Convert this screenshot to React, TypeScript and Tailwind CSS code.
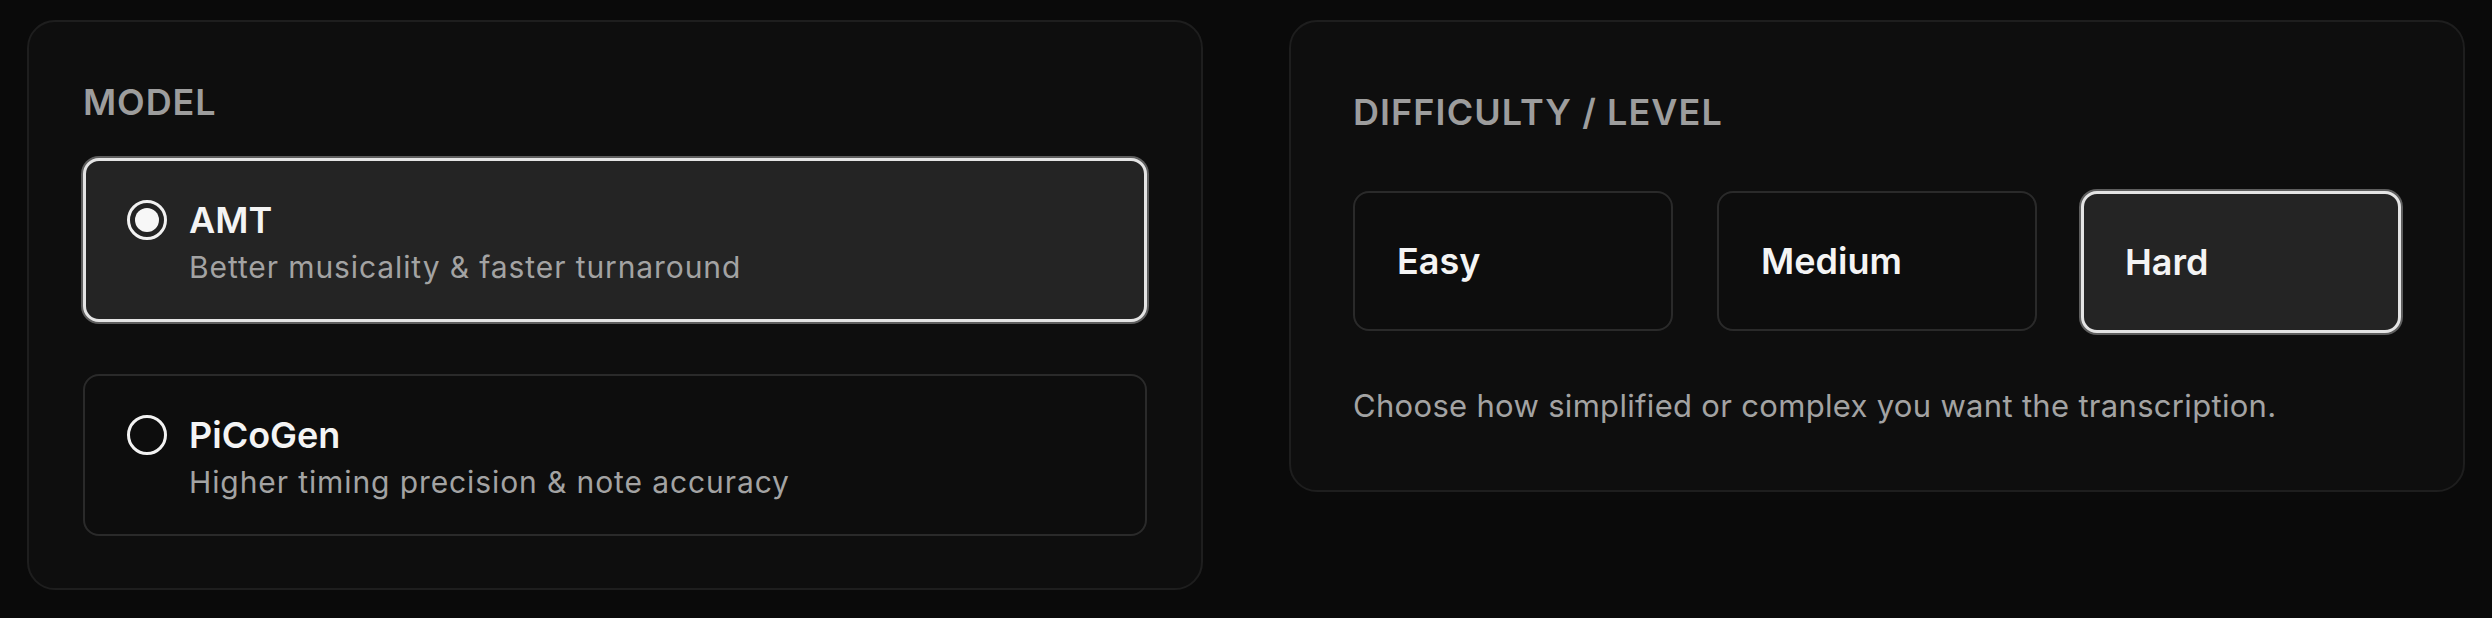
import { useState } from 'react';

type ModelId = 'amt' | 'picogen';
type Level = 'easy' | 'medium' | 'hard';

const MODELS: { id: ModelId; name: string; blurb: string }[] = [
  { id: 'amt', name: 'AMT', blurb: 'Better musicality & faster turnaround' },
  { id: 'picogen', name: 'PiCoGen', blurb: 'Higher timing precision & note accuracy' },
];

const LEVELS: { id: Level; label: string }[] = [
  { id: 'easy', label: 'Easy' },
  { id: 'medium', label: 'Medium' },
  { id: 'hard', label: 'Hard' },
];

function Radio({ checked }: { checked: boolean }) {
  return (
    <span className="mt-[5px] flex h-[40px] w-[40px] shrink-0 items-center justify-center rounded-full border-[3px] border-[#f2f2f2]">
      {checked && <span className="h-[24px] w-[24px] rounded-full bg-[#f7f7f7]" />}
    </span>
  );
}

export default function App() {
  const [model, setModel] = useState<ModelId>('amt');
  const [level, setLevel] = useState<Level>('hard');

  return (
    <div className="min-h-screen bg-[#0a0a0a] px-[27px] pt-[20px] font-['Inter',sans-serif]">
      <div className="grid grid-cols-2 items-start gap-[86px]">
        <section className="rounded-[28px] border-2 border-[#1e1e1e] bg-[#0e0e0e] px-[54px] pt-[55px] pb-[52px]">
          <h3 className="text-[36px] leading-[51px] font-semibold uppercase tracking-[0.025em] text-[#9d9d9d]">Model</h3>
          <div className="mt-[30px] flex flex-col gap-[52px]">
            {MODELS.map((m) => {
              const on = model === m.id;
              return (
                <button
                  key={m.id}
                  onClick={() => setModel(m.id)}
                  className={
                    on
                      ? 'flex items-start gap-[22px] rounded-[16px] border-[3px] border-[#e4e4e4] bg-[#242424] px-[41px] pt-[34px] pb-[31px] text-left shadow-[0_0_0_2px_#5e5e5e]'
                      : 'flex items-start gap-[22px] rounded-[16px] border-2 border-[#2a2a2a] bg-[#0d0d0d] px-[42px] pt-[34px] pb-[31px] text-left'
                  }
                >
                  <Radio checked={on} />
                  <div>
                    <div className="text-[36px] leading-[50px] font-semibold text-[#f4f4f4]">{m.name}</div>
                    <div className="mt-[2px] text-[30px] leading-[41px] tracking-[0.03em] text-[#a3a3a3]">{m.blurb}</div>
                  </div>
                </button>
              );
            })}
          </div>
        </section>

        <section className="rounded-[28px] border-2 border-[#1e1e1e] bg-[#0e0e0e] px-[62px] pt-[65px] pb-[62px]">
          <h3 className="text-[36px] leading-[51px] font-semibold uppercase tracking-[0.03em] text-[#9d9d9d]">Difficulty / Level</h3>
          <div className="mt-[53px] grid grid-cols-3 gap-[44px]">
            {LEVELS.map((l) => {
              const on = level === l.id;
              return (
                <button
                  key={l.id}
                  onClick={() => setLevel(l.id)}
                  className={
                    on
                      ? 'flex h-[142px] items-center rounded-[16px] border-[3px] border-[#e4e4e4] bg-[#242424] px-[41px] text-left shadow-[0_0_0_2px_#5e5e5e]'
                      : 'flex h-[140px] items-center rounded-[16px] border-2 border-[#2a2a2a] bg-[#0d0d0d] px-[42px] text-left'
                  }
                >
                  <span className="text-[36px] font-semibold text-[#f4f4f4]">{l.label}</span>
                </button>
              );
            })}
          </div>
          <p className="mt-[50px] text-[31px] leading-[45px] tracking-[0.01em] text-[#a3a3a3]">
            Choose how simplified or complex you want the transcription.
          </p>
        </section>
      </div>
    </div>
  );
}
